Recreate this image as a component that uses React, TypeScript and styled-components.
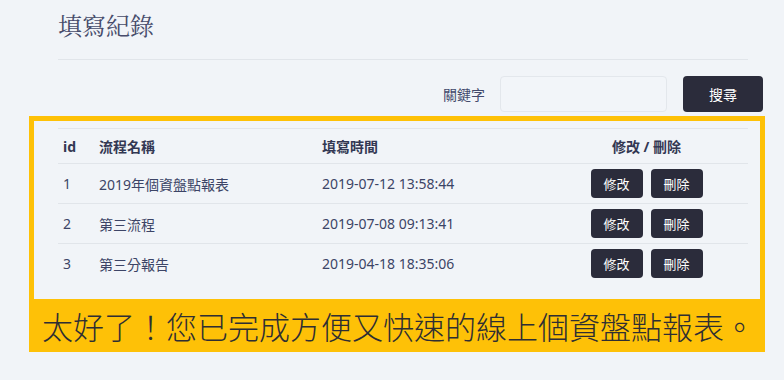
import React from 'react';
import styled, { createGlobalStyle } from 'styled-components';

const GlobalStyle = createGlobalStyle`
  html, body {
    margin: 0;
    padding: 0;
    background: #f1f4f8;
    font-family: "Noto Sans", "Noto Sans CJK TC", sans-serif;
    color: #3c4466;
  }
`;

const Page = styled.div`
  width: 690px;
  padding: 10px 0 0 58px;
`;

const Header = styled.div`
  padding-bottom: 15px;
  border-bottom: 1px solid #e1e5ea;
`;

const Title = styled.h1`
  margin: 0;
  font-family: "Liberation Serif", "Noto Serif CJK TC", "Noto Sans CJK TC", serif;
  font-size: 24px;
  font-weight: normal;
  line-height: 34px;
  color: #474c6b;
`;

const SearchBar = styled.form`
  display: flex;
  justify-content: flex-end;
  align-items: center;
  margin: 16px -15px 0 0;
  height: 36px;
`;

const Label = styled.label`
  font-size: 14px;
  color: #434a6c;
  margin-right: 15px;
`;

const Input = styled.input`
  width: 167px;
  height: 36px;
  box-sizing: border-box;
  border: 1px solid #e3e7ec;
  border-radius: 4px;
  background: #f2f5f9;
  margin-right: 16px;
`;

const DarkButton = styled.button<{ $w: number; $h: number; $fs: number }>`
  width: ${p => p.$w}px;
  height: ${p => p.$h}px;
  border: 0;
  border-radius: 4px;
  background: #2b2c3b;
  color: #fff;
  font-family: "Noto Sans CJK TC", sans-serif;
  font-size: ${p => p.$fs}px;
  padding: 0;
  cursor: pointer;
`;

const Highlight = styled.div`
  margin: 4px -17px 0 -29px;
  border: 5px solid #fec107;
  border-bottom: 0;
`;

const TableArea = styled.div`
  padding: 7px 12px 16px 24px;
`;

const Table = styled.table`
  width: 690px;
  border-collapse: collapse;
  table-layout: fixed;
  font-size: 14px;
  border-top: 1px solid #e1e5ea;
`;

const HeadCell = styled.th<{ $center?: boolean }>`
  height: 34px;
  padding: 0 5px;
  text-align: ${p => (p.$center ? 'center' : 'left')};
  font-weight: bold;
  color: #333853;
  border-bottom: 1px solid #e1e5ea;
`;

const Row = styled.tr`
  & + & td {
    border-top: 1px solid #e1e5ea;
  }
`;

const Cell = styled.td<{ $center?: boolean }>`
  height: 39px;
  padding: 0 5px;
  text-align: ${p => (p.$center ? 'center' : 'left')};
  color: #3c4466;
`;

const Actions = styled.div`
  display: flex;
  justify-content: center;
  gap: 8px;
`;

const Caption = styled.div`
  background: #fec107;
  height: 53px;
  line-height: 53px;
  padding-left: 8px;
  font-family: "Noto Sans CJK TC", sans-serif;
  font-size: 31px;
  font-weight: 300;
  color: #2e2e33;
  white-space: nowrap;
`;

const records = [
  { id: 1, name: '2019年個資盤點報表', time: '2019-07-12 13:58:44' },
  { id: 2, name: '第三流程', time: '2019-07-08 09:13:41' },
  { id: 3, name: '第三分報告', time: '2019-04-18 18:35:06' },
];

export default function App() {
  return (
    <>
      <GlobalStyle />
      <Page>
        <Header>
          <Title>填寫紀錄</Title>
        </Header>
        <SearchBar onSubmit={e => e.preventDefault()}>
          <Label>關鍵字</Label>
          <Input />
          <DarkButton $w={80} $h={36} $fs={14}>搜尋</DarkButton>
        </SearchBar>
        <Highlight>
          <TableArea>
            <Table>
              <colgroup>
                <col style={{ width: 36 }} />
                <col style={{ width: 223 }} />
                <col style={{ width: 228 }} />
                <col style={{ width: 203 }} />
              </colgroup>
              <thead>
                <tr>
                  <HeadCell>id</HeadCell>
                  <HeadCell>流程名稱</HeadCell>
                  <HeadCell>填寫時間</HeadCell>
                  <HeadCell $center>修改 / 刪除</HeadCell>
                </tr>
              </thead>
              <tbody>
                {records.map(r => (
                  <Row key={r.id}>
                    <Cell>{r.id}</Cell>
                    <Cell>{r.name}</Cell>
                    <Cell>{r.time}</Cell>
                    <Cell $center>
                      <Actions>
                        <DarkButton $w={52} $h={29} $fs={13}>修改</DarkButton>
                        <DarkButton $w={52} $h={29} $fs={13}>刪除</DarkButton>
                      </Actions>
                    </Cell>
                  </Row>
                ))}
              </tbody>
            </Table>
          </TableArea>
          <Caption>太好了！您已完成方便又快速的線上個資盤點報表。</Caption>
        </Highlight>
      </Page>
    </>
  );
}
